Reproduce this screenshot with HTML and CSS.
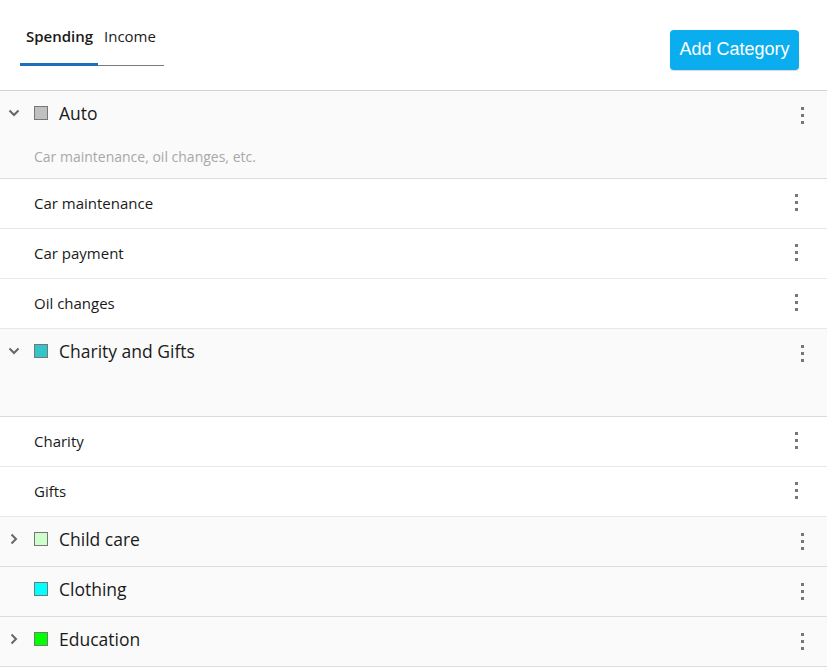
FILE: index.html
```html
<!DOCTYPE html>
<html>
<head>
<meta charset="utf-8">
<link rel="stylesheet" href="styles.css">
</head>
<body>
<div class="header">
  <div class="tabs">
    <div class="tab active">Spending</div>
    <div class="tab">Income</div>
  </div>
  <button class="add-btn">Add Category</button>
</div>

<div class="list">
  <div class="group">
    <div class="group-head">
      <span class="chev"><svg width="12" height="8" viewBox="0 0 12 8"><path d="M1.5 1.5 L6 6 L10.5 1.5" fill="none" stroke="#666" stroke-width="2"/></svg></span>
      <span class="swatch" style="background:#c0c0c0"></span>
      <span class="group-name">Auto</span>
      <span class="dots head-dots"><i></i><i></i><i></i></span>
    </div>
    <div class="group-desc">Car maintenance, oil changes, etc.</div>
  </div>
  <div class="row"><span class="row-name">Car maintenance</span><span class="dots"><i></i><i></i><i></i></span></div>
  <div class="row"><span class="row-name">Car payment</span><span class="dots"><i></i><i></i><i></i></span></div>
  <div class="row"><span class="row-name">Oil changes</span><span class="dots"><i></i><i></i><i></i></span></div>

  <div class="group">
    <div class="group-head">
      <span class="chev"><svg width="12" height="8" viewBox="0 0 12 8"><path d="M1.5 1.5 L6 6 L10.5 1.5" fill="none" stroke="#666" stroke-width="2"/></svg></span>
      <span class="swatch" style="background:#33c5c8"></span>
      <span class="group-name">Charity and Gifts</span>
      <span class="dots head-dots"><i></i><i></i><i></i></span>
    </div>
    <div class="group-desc"></div>
  </div>
  <div class="row"><span class="row-name">Charity</span><span class="dots"><i></i><i></i><i></i></span></div>
  <div class="row"><span class="row-name">Gifts</span><span class="dots"><i></i><i></i><i></i></span></div>

  <div class="group compact">
    <div class="group-head">
      <span class="chev"><svg width="8" height="12" viewBox="0 0 8 12"><path d="M1.5 1.5 L6 6 L1.5 10.5" fill="none" stroke="#666" stroke-width="2"/></svg></span>
      <span class="swatch" style="background:#ccffcc"></span>
      <span class="group-name">Child care</span>
      <span class="dots head-dots"><i></i><i></i><i></i></span>
    </div>
  </div>
  <div class="group compact">
    <div class="group-head">
      <span class="chev"></span>
      <span class="swatch" style="background:#00ffff"></span>
      <span class="group-name">Clothing</span>
      <span class="dots head-dots"><i></i><i></i><i></i></span>
    </div>
  </div>
  <div class="group compact">
    <div class="group-head">
      <span class="chev"><svg width="8" height="12" viewBox="0 0 8 12"><path d="M1.5 1.5 L6 6 L1.5 10.5" fill="none" stroke="#666" stroke-width="2"/></svg></span>
      <span class="swatch" style="background:#00ff00"></span>
      <span class="group-name">Education</span>
      <span class="dots head-dots"><i></i><i></i><i></i></span>
    </div>
  </div>
</div>
</body>
</html>
```

FILE: styles.css
```css
* { box-sizing: border-box; }
html, body { margin: 0; padding: 0; background: #fff; }
body {
  font-family: "Open Sans", "Noto Sans", sans-serif;
  color: #1a1a1a;
  width: 827px;
  overflow: hidden;
}
.header {
  height: 91px;
  border-bottom: 1px solid #d4d4d4;
  display: flex;
  justify-content: space-between;
  align-items: flex-start;
  padding: 0 28px 0 20px;
}
.tabs {
  display: flex;
  margin-top: 24px;
  border-bottom: 1px solid #7a7a7a;
  height: 42px;
  width: 144px;
}
.tab {
  font-size: 15px;
  padding: 1px 7px 0 6px;
  height: 41px;
  line-height: 22px;
  color: #1a1a1a;
}
.tab.active {
  font-weight: 600;
  border-bottom: 3px solid #1a70bb;
  height: 42px;
  margin-bottom: -2px;
  width: 78px;
  padding-right: 0;
}
.add-btn {
  margin-top: 30px;
  height: 40px;
  width: 129px;
  border: none;
  border-radius: 4px;
  background: #0aaeee;
  color: #fff;
  font-family: "Liberation Sans", Arial, sans-serif;
  font-size: 18px;
  padding: 0 0 2px;
  box-shadow: 0 1px 1px rgba(0,0,0,0.15);
}
.group {
  background: #fafafa;
  border-bottom: 1px solid #dcdcdc;
  padding-bottom: 5px;
}
.group-head {
  height: 44px;
  display: flex;
  align-items: center;
  padding-left: 8px;
}
.chev {
  width: 26px;
  display: flex;
  align-items: center;
  justify-content: flex-start;
}
.chev svg { display: block; }
.group.compact .chev { padding-left: 2px; }
.swatch {
  width: 14px;
  height: 14px;
  border: 1px solid #777;
  margin-right: 11px;
}
.group-name {
  font-size: 17.5px;
  flex: 1;
  color: #1a1a1a;
  padding-bottom: 1px;
}
.group-desc {
  height: 38px;
  padding: 6px 0 0 34px;
  font-size: 14px;
  color: #a8a8a8;
  line-height: 32px;
}
.row {
  height: 50px;
  border-bottom: 1px solid #e8e8e8;
  display: flex;
  align-items: center;
  padding-left: 34px;
  padding-bottom: 2px;
  background: #fff;
}
.row-name {
  font-size: 15px;
  flex: 1;
}
.dots {
  display: flex;
  flex-direction: column;
  gap: 4px;
  width: 3px;
  margin-right: 29px;
}
.dots i {
  display: block;
  width: 3px;
  height: 3px;
  background: #777;
}
.head-dots {
  margin-right: 23px;
  margin-top: 4px;
}
```
